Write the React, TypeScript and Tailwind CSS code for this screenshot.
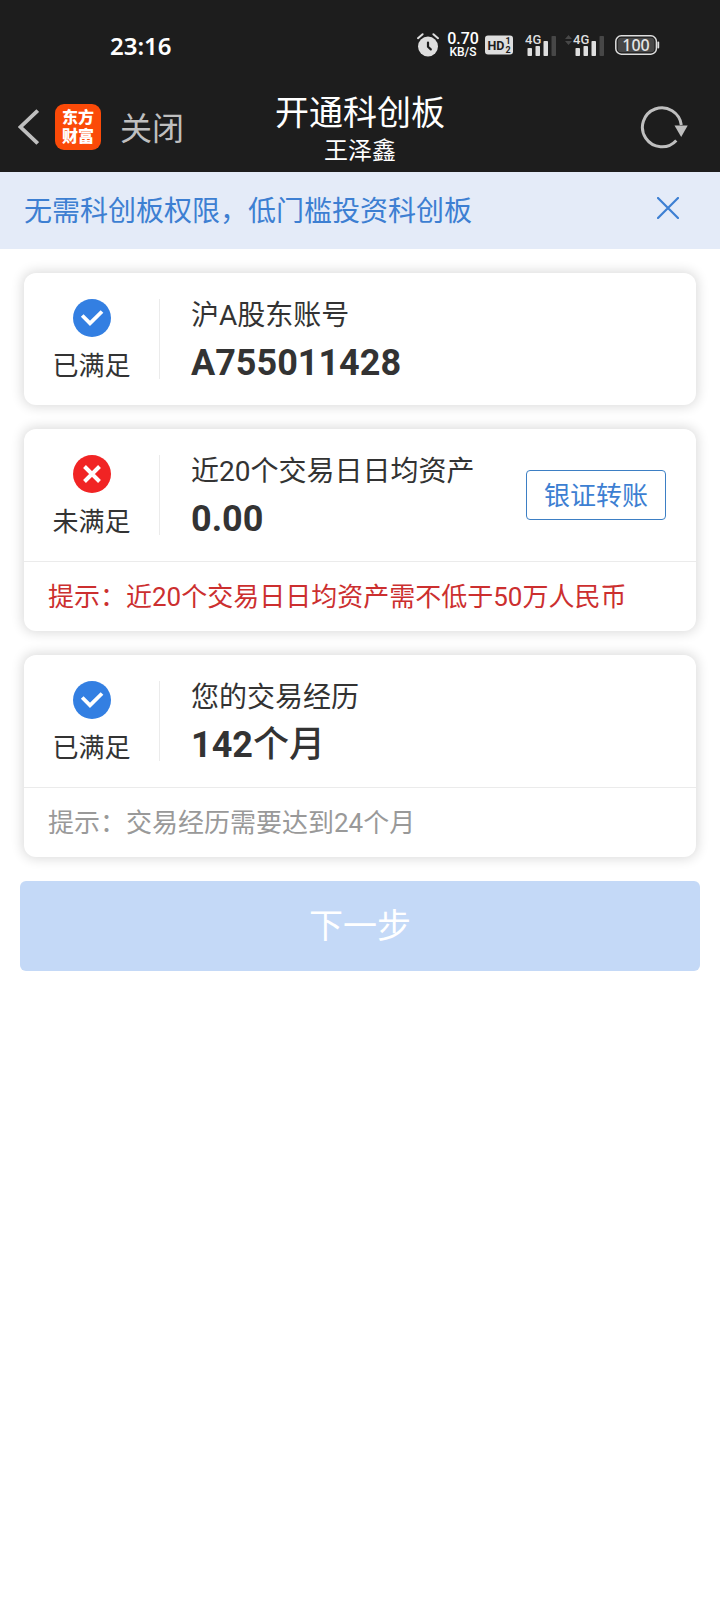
import type { ReactNode } from "react";

function AlarmIcon() {
  return (
    <svg width="22" height="24" viewBox="0 0 22 24" aria-hidden="true">
      <circle cx="11" cy="13.5" r="10" fill="#dedede" />
      <path d="M1 5.2 5.6 1.2M21 5.2 16.4 1.2" stroke="#dedede" strokeWidth="2" strokeLinecap="round" />
      <path d="M11 9.5v4.300l2.800 2.600" fill="none" stroke="#1d1d1d" strokeWidth="2.2" strokeLinecap="round" strokeLinejoin="round" />
    </svg>
  );
}

function HdIcon() {
  return (
    <svg width="28" height="20" viewBox="0 0 28 20" className="font-['Roboto',sans-serif]" role="img" aria-label="HD">
      <rect x="0" y="0.5" width="28" height="19" rx="3" fill="#dedede" />
      <text x="2.5" y="14.800" fontSize="12.5" fontWeight="700" fill="#1d1d1d">HD</text>
      <text x="20.5" y="9" fontSize="9" fontWeight="700" fill="#1d1d1d">1</text>
      <text x="20.5" y="17.5" fontSize="9" fontWeight="700" fill="#1d1d1d">2</text>
    </svg>
  );
}

function SignalIcon({ arrows = false }: { arrows?: boolean }) {
  return (
    <svg
      width={arrows ? 40 : 32}
      height="24"
      viewBox={arrows ? "-8 0 40 24" : "0 0 32 24"}
      className="font-['Roboto',sans-serif]"
      role="img"
      aria-label="4G"
    >
      {arrows && <path d="M-8 6 -4.5 2 -1 6zM-8 8h7L-4.5 12z" fill="#474747" />}
      <rect x="2.5" y="15" width="4.5" height="8" rx="0.8" fill="#dedede" />
      <rect x="10.5" y="13" width="4.5" height="10" rx="0.8" fill="#dedede" />
      <rect x="18.5" y="8" width="4.5" height="15" rx="0.8" fill="#dedede" />
      <rect x="26.5" y="3" width="4.5" height="20" rx="0.8" fill="#474747" />
      <text x="0" y="11" fontSize="13" fontWeight="500" fill="#dedede">4G</text>
    </svg>
  );
}

function BatteryIcon() {
  return (
    <svg width="45" height="20" viewBox="0 0 45 20" className="font-['Noto_Sans',sans-serif]" role="img" aria-label="100">
      <rect x="0.8" y="0.8" width="40.6" height="18.4" rx="5.5" fill="none" stroke="#dedede" strokeWidth="1.5" />
      <rect x="2.8" y="2.8" width="36.6" height="14.4" rx="3.5" fill="#474747" />
      <path d="M43.3 7.5v5" stroke="#dedede" strokeWidth="1.8" strokeLinecap="round" />
      <text x="21" y="15.7" fontSize="16" fontWeight="500" textAnchor="middle" fill="#e6e6e6">100</text>
    </svg>
  );
}

function StatusBar() {
  return (
    <div className="flex h-[84px] items-center justify-between pt-1.5 pr-[60px] pl-[110px] text-white">
      <time className="pt-0.5 font-['Noto_Sans',sans-serif] text-[24px] font-semibold">23:16</time>
      <div className="flex items-center">
        <AlarmIcon />
        <div className="ml-2 flex w-8 flex-col items-center font-medium">
          <span className="text-[16px] leading-[14px]">0.70</span>
          <span className="text-[12px] leading-[12px]">KB/S</span>
        </div>
        <div className="ml-1.5 flex items-center">
          <HdIcon />
        </div>
        <div className="ml-3 flex items-center gap-2">
          <SignalIcon />
          <SignalIcon arrows />
        </div>
        <div className="ml-2.5 flex items-center">
          <BatteryIcon />
        </div>
      </div>
    </div>
  );
}

function NavBar() {
  return (
    <div className="grid h-[88px] grid-cols-[1fr_auto_1fr] items-center pb-0.5">
      <div className="flex items-center pl-[18px]">
        <button type="button" aria-label="返回">
          <svg width="21" height="36" viewBox="0 0 21 36" fill="none" aria-hidden="true">
            <path d="M19.700 1.500 2.500 18l17.200 16.500" stroke="#bfbfbf" strokeWidth="3.800" />
          </svg>
        </button>
        <span className="ml-4 flex size-[46px] flex-col items-center justify-center rounded-[9px] bg-[#fb4a08] text-[16px] leading-[19px] font-black text-white">
          <span>东方</span>
          <span>财富</span>
        </span>
        <button type="button" className="ml-[19px] pt-1 text-[32px] leading-[44px] text-[#bfbfbf]">
          关闭
        </button>
      </div>
      <div className="flex flex-col items-center pt-1.5 text-white">
        <h1 className="text-[34px] leading-[42px]">开通科创板</h1>
        <p className="text-[24px] leading-[34px]">王泽鑫</p>
      </div>
      <div className="flex justify-end pr-8">
        <button type="button" aria-label="刷新">
          <svg width="48" height="44" viewBox="0 0 48 44" fill="none" aria-hidden="true">
            <path d="M41.300 20A19.500 19.500 0 1 0 36.300 35.500" stroke="#bfbfbf" strokeWidth="3" />
            <path d="M34.500 20.500h13.200L41.200 32z" fill="#bfbfbf" />
          </svg>
        </button>
      </div>
    </div>
  );
}

function StatusMark({ ok }: { ok: boolean }) {
  return (
    <svg width="38" height="38" viewBox="0 0 38 38" fill="none" aria-hidden="true">
      <circle cx="19" cy="19" r="19" fill={ok ? "#337fe2" : "#f12424"} />
      {ok ? (
        <path d="M9.200 16.500 17 24.300 29 12.500" stroke="#fff" strokeWidth="3.800" />
      ) : (
        <path d="M11.500 11.500 26.500 26.500M26.500 11.500 11.500 26.500" stroke="#fff" strokeWidth="4" />
      )}
    </svg>
  );
}

type ConditionProps = {
  ok: boolean;
  title: string;
  value: string;
  unit?: string;
  action?: ReactNode;
  hint?: string;
};

function ConditionCard({ ok, title, value, unit, action, hint }: ConditionProps) {
  return (
    <section className="rounded-xl bg-white shadow-[0_0_12px_2px_rgba(0,0,0,0.14)]">
      <div className="flex items-center py-[26px] pr-[30px]">
        <div className="flex h-20 w-[136px] shrink-0 flex-col items-center justify-between border-r border-[#ebebeb]">
          <StatusMark ok={ok} />
          <span className="text-[26px] leading-[26px]">{ok ? "已满足" : "未满足"}</span>
        </div>
        <div className="flex h-20 flex-1 flex-col justify-between pl-[31px]">
          <h2 className="text-[28px] leading-[34px]">{title}</h2>
          <p className="text-[36px] leading-[32px] font-bold">
            {value}
            {unit && <span className="font-medium">{unit}</span>}
          </p>
        </div>
        {action}
      </div>
      {hint && (
        <p
          className={`border-t border-[#ebebeb] px-6 pt-[17px] pb-[15px] text-[26px] leading-[37px] ${ok ? "text-[#999999]" : "text-[#cc2f2f]"}`}
        >
          {hint}
        </p>
      )}
    </section>
  );
}

export default function App() {
  return (
    <div className="min-h-screen bg-white font-['Roboto','Noto_Sans_CJK_SC',sans-serif] text-[#333333]">
      <header className="bg-[#1d1d1d]">
        <StatusBar />
        <NavBar />
      </header>
      <div className="flex h-[77px] items-start justify-between bg-[#e4ebf8] pr-[41px] pl-6 text-[#3d7fd2]">
        <p className="pt-5 text-[28px] leading-10">无需科创板权限，低门槛投资科创板</p>
        <button type="button" aria-label="关闭提示" className="pt-[25px]">
          <svg width="22" height="22" viewBox="0 0 22 22" aria-hidden="true">
            <path d="M1 1 21 21M21 1 1 21" stroke="#3d7fd2" strokeWidth="2.2" strokeLinecap="round" />
          </svg>
        </button>
      </div>
      <main className="flex flex-col gap-6 py-6">
        <div className="flex flex-col gap-6 px-6">
          <ConditionCard ok title="沪A股东账号" value="A755011428" />
          <ConditionCard
            ok={false}
            title="近20个交易日日均资产"
            value="0.00"
            hint="提示：近20个交易日日均资产需不低于50万人民币"
            action={
              <button
                type="button"
                className="h-[50px] w-[140px] rounded border border-[#3d7fc4] pt-0.5 text-[26px] text-[#3d7fd2]"
              >
                银证转账
              </button>
            }
          />
          <ConditionCard ok title="您的交易经历" value="142" unit="个月" hint="提示：交易经历需要达到24个月" />
        </div>
        <div className="px-5">
          <button type="button" disabled className="h-[90px] w-full rounded-md bg-[#c4d9f7] text-[34px] text-white">
            下一步
          </button>
        </div>
      </main>
    </div>
  );
}
